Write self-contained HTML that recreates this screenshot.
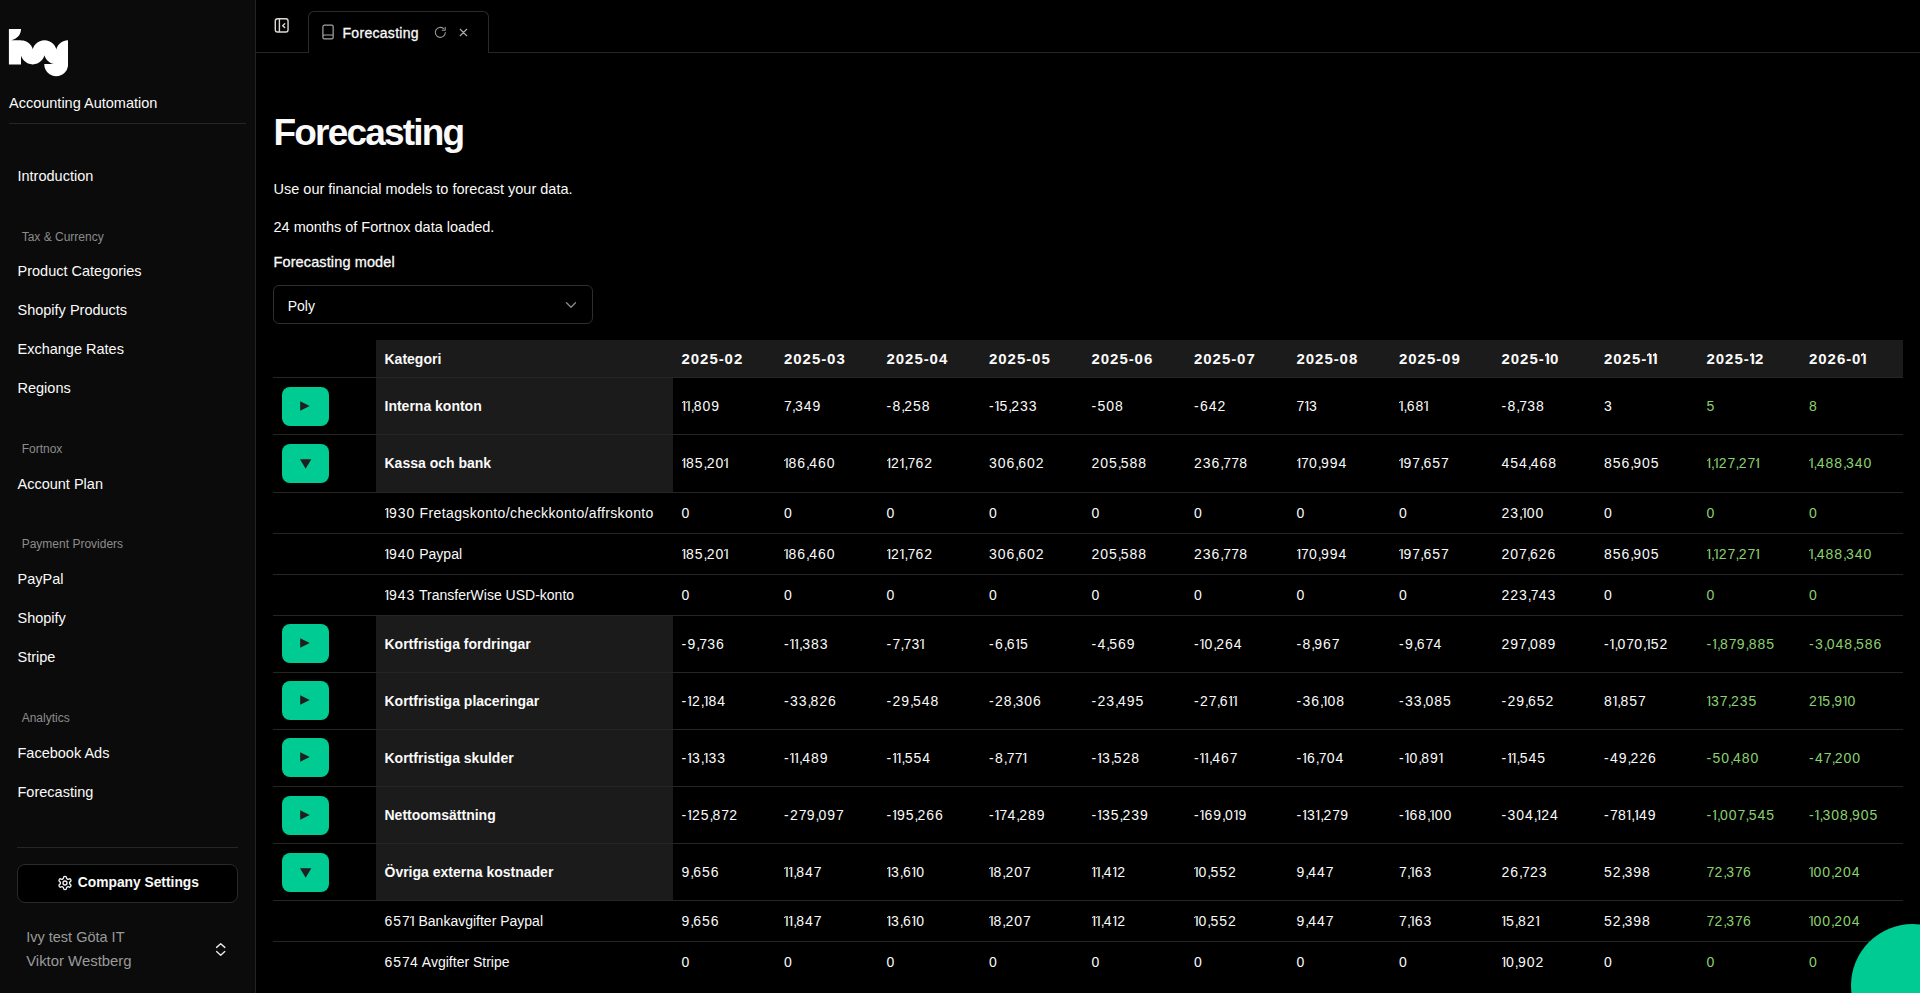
<!DOCTYPE html>
<html><head><meta charset="utf-8"><title>Forecasting</title>
<style>
html,body{margin:0;padding:0;background:#000;}
body{width:1920px;height:993px;overflow:hidden;position:relative;font-family:"Liberation Sans",sans-serif;color:#fafafa;}
.t{position:absolute;white-space:nowrap;}
.t i{font-style:normal;}
.o{position:relative;padding-left:0.9px;letter-spacing:-0.2px;}
.ob{position:relative;padding-left:1px;letter-spacing:0.2px;}
.ob::before{content:"";position:absolute;left:0px;top:3.4px;width:2.6px;height:2px;background:currentColor;transform:skewY(-28deg);transform-origin:100% 0;}
.o::before{content:"";position:absolute;left:0.2px;top:3.2px;width:2.2px;height:1.25px;background:currentColor;transform:skewY(-28deg);transform-origin:100% 0;}
.abs{position:absolute;}
#sb{position:absolute;left:0;top:0;width:255px;height:993px;background:#0b0b0b;border-right:1px solid #232323;}
</style></head><body>
<div id="sb"></div>
<svg class="abs" style="left:0;top:0" width="80" height="80" viewBox="0 0 80 80"><defs><clipPath id="lc"><rect x="0" y="0" width="68.1" height="80"/></clipPath></defs><path fill="#fff" clip-path="url(#lc)" d="M8.9 28.9 H21.05 A12.15 11.6 0 0 1 8.9 40.5 Z M8.9 40.3 H21 V64.4 H8.9 Z M8.90 52.599999999999994 V52.3 A12.1 12.1 0 0 1 33.10 52.3 V52.599999999999994 Z M32.40 52.599999999999994 V52.3 A12.1 12.1 0 0 1 56.60 52.3 V52.599999999999994 Z M56.00 52.599999999999994 V52.3 A12.1 12.1 0 0 1 80.20 52.3 V52.599999999999994 Z M44.80 52.0 V52.3 A12.1 12.1 0 0 1 20.60 52.3 V52.0 Z M68.30 52.0 V52.3 A12.1 12.1 0 0 1 44.10 52.3 V52.0 Z M56.2 52 H68.1 V64.7 H56.2 Z M68.10 64.05 V64.35 A11.9 11.9 0 0 1 44.30 64.35 V64.05 Z"/></svg>
<div class="t " style="left:9px;top:96.13px;font-size:14.5px;line-height:14.5px;">Accounting Automation</div>
<div class="abs" style="left:9px;top:123px;width:237px;height:1px;background:#262626"></div>
<div class="t " style="left:17.5px;top:168.73px;font-size:14.5px;line-height:14.5px;">Introduction</div>
<div class="t " style="left:21.7px;top:230.64px;font-size:12px;line-height:12px;color:#8c8c8c;">Tax &amp; Currency</div>
<div class="t " style="left:17.5px;top:263.53px;font-size:14.5px;line-height:14.5px;">Product Categories</div>
<div class="t " style="left:17.5px;top:302.53px;font-size:14.5px;line-height:14.5px;">Shopify Products</div>
<div class="t " style="left:17.5px;top:341.53px;font-size:14.5px;line-height:14.5px;">Exchange Rates</div>
<div class="t " style="left:17.5px;top:380.53px;font-size:14.5px;line-height:14.5px;">Regions</div>
<div class="t " style="left:21.7px;top:442.84px;font-size:12px;line-height:12px;color:#8c8c8c;">Fortnox</div>
<div class="t " style="left:17.5px;top:476.93px;font-size:14.5px;line-height:14.5px;">Account Plan</div>
<div class="t " style="left:21.7px;top:538.04px;font-size:12px;line-height:12px;color:#8c8c8c;">Payment Providers</div>
<div class="t " style="left:17.5px;top:571.63px;font-size:14.5px;line-height:14.5px;">PayPal</div>
<div class="t " style="left:17.5px;top:610.53px;font-size:14.5px;line-height:14.5px;">Shopify</div>
<div class="t " style="left:17.5px;top:649.53px;font-size:14.5px;line-height:14.5px;">Stripe</div>
<div class="t " style="left:21.7px;top:711.64px;font-size:12px;line-height:12px;color:#8c8c8c;">Analytics</div>
<div class="t " style="left:17.5px;top:745.53px;font-size:14.5px;line-height:14.5px;">Facebook Ads</div>
<div class="t " style="left:17.5px;top:784.63px;font-size:14.5px;line-height:14.5px;">Forecasting</div>
<div class="abs" style="left:17px;top:847px;width:221px;height:1px;background:#262626"></div>
<div class="abs" style="left:17px;top:864px;width:219px;height:37px;border:1px solid #2a2a2a;border-radius:8px;background:#000"></div>
<svg class="abs" style="left:57px;top:875px" width="16" height="16" viewBox="0 0 24 24" fill="none" stroke="#f2f2f2" stroke-width="2" stroke-linecap="round" stroke-linejoin="round"><path d="M12.22 2h-.44a2 2 0 0 0-2 2v.18a2 2 0 0 1-1 1.73l-.43.25a2 2 0 0 1-2 0l-.15-.08a2 2 0 0 0-2.73.73l-.22.38a2 2 0 0 0 .73 2.73l.15.1a2 2 0 0 1 1 1.72v.51a2 2 0 0 1-1 1.74l-.15.09a2 2 0 0 0-.73 2.73l.22.38a2 2 0 0 0 2.73.73l.15-.08a2 2 0 0 1 2 0l.43.25a2 2 0 0 1 1 1.73V20a2 2 0 0 0 2 2h.44a2 2 0 0 0 2-2v-.18a2 2 0 0 1 1-1.73l.43-.25a2 2 0 0 1 2 0l.15.08a2 2 0 0 0 2.73-.73l.22-.39a2 2 0 0 0-.73-2.73l-.15-.08a2 2 0 0 1-1-1.74v-.5a2 2 0 0 1 1-1.74l.15-.09a2 2 0 0 0 .73-2.73l-.22-.38a2 2 0 0 0-2.73-.73l-.15.08a2 2 0 0 1-2 0l-.43-.25a2 2 0 0 1-1-1.73V4a2 2 0 0 0-2-2z"/><circle cx="12" cy="12" r="3"/></svg>
<div class="t " style="left:77.8px;top:876.42px;font-size:13.8px;line-height:13.8px;font-weight:700;">Company Settings</div>
<div class="t " style="left:26.2px;top:929.73px;font-size:14.5px;line-height:14.5px;color:#9a9a9a;">Ivy test Göta IT</div>
<div class="t " style="left:26.2px;top:953.99px;font-size:14.9px;line-height:14.9px;color:#9a9a9a;">Viktor Westberg</div>
<svg class="abs" style="left:214px;top:941px" width="14" height="16" viewBox="0 0 14 16" fill="none" stroke="#ebe8e6" stroke-width="1.4" stroke-linecap="round" stroke-linejoin="round"><path d="M2.6 6.4 L6.7 2.8 L10.8 6.4"/><path d="M2.6 10.6 L6.7 14.3 L10.8 10.6"/></svg>
<div class="abs" style="left:256px;top:52px;width:1664px;height:1px;background:#262626"></div>
<div class="abs" style="left:308px;top:11px;width:179px;height:41px;border:1px solid #2a2a2a;border-bottom:none;border-radius:6px 6px 0 0;background:#000"></div>
<svg class="abs" style="left:273px;top:17px" width="17" height="17" viewBox="0 0 17 17" fill="none" stroke="#dcd9d6" stroke-width="1.4"><rect x="2.3" y="1.8" width="12.75" height="13.2" rx="2.2"/><path d="M6.4 1.8 V15"/><path d="M11.7 6.8 L9.7 8.7 L11.7 10.6" stroke-linecap="round" stroke-linejoin="round"/></svg>
<svg class="abs" style="left:321px;top:24px" width="14" height="16" viewBox="0 0 14 16" fill="none" stroke="#a8a5a2" stroke-width="1.2"><path d="M1.9 12.6 V2.8 a1.6 1.6 0 0 1 1.6-1.6 H10.95 a1.2 1.2 0 0 1 1.2 1.2 V13.6 a1.2 1.2 0 0 1 -1.2 1.2 H3.5 a1.6 1.6 0 0 1 -1.6-1.6 V12.6 a1.6 1.6 0 0 1 1.6-1.6 H12.15"/></svg>
<div class="t " style="left:342.5px;top:25.65px;font-size:14px;line-height:14px;letter-spacing:0.3px;-webkit-text-stroke:0.3px #fafafa;">Forecasting</div>
<svg class="abs" style="left:434px;top:26px" width="13" height="13" viewBox="0 0 13 13" fill="none" stroke="#9a9a9a" stroke-width="1.1" stroke-linecap="round"><path d="M11.3 6.5 A5 5 0 1 1 9.6 2.6"/><path d="M11.2 1.2 V4.2 H8.2" stroke-linejoin="round"/></svg>
<svg class="abs" style="left:458px;top:27px" width="10" height="10" viewBox="0 0 10 10" fill="none" stroke="#a8a8a8" stroke-width="1.2" stroke-linecap="round"><path d="M2.2 2.3 L8.7 8.7 M8.7 2.3 L2.2 8.7"/></svg>
<div class="t " style="left:273.5px;top:113.58px;font-size:37px;line-height:37px;font-weight:700;letter-spacing:-1.8px;">Forecasting</div>
<div class="t " style="left:273.5px;top:181.53px;font-size:14.5px;line-height:14.5px;">Use our financial models to forecast your data.</div>
<div class="t " style="left:273.5px;top:219.63px;font-size:14.5px;line-height:14.5px;">24 months of Fortnox data loaded.</div>
<div class="t " style="left:273.5px;top:255.13px;font-size:14.5px;line-height:14.5px;letter-spacing:0.12px;-webkit-text-stroke:0.3px #fafafa;">Forecasting model</div>
<div class="abs" style="left:273px;top:285px;width:318px;height:37px;border:1px solid #2e2e2e;border-radius:6px;background:#000"></div>
<div class="t " style="left:287.7px;top:298.55px;font-size:14px;line-height:14px;">Poly</div>
<svg class="abs" style="left:564px;top:298.5px" width="14" height="12" viewBox="0 0 14 12" fill="none" stroke="#8a8a8a" stroke-width="1.3" stroke-linecap="round" stroke-linejoin="round"><path d="M2.5 3.8 L7 8.2 L11.5 3.8"/></svg>
<div class="abs" style="left:376px;top:340px;width:1527px;height:37px;background:#1b1b1b"></div>
<div class="t " style="left:384.5px;top:352.15px;font-size:14px;line-height:14px;font-weight:700;">Kategori</div>
<div class="t " style="left:681.5px;top:350.90px;font-size:15px;line-height:15px;font-weight:700;letter-spacing:0.95px;">2025-02</div>
<div class="t " style="left:784.0px;top:350.90px;font-size:15px;line-height:15px;font-weight:700;letter-spacing:0.95px;">2025-03</div>
<div class="t " style="left:886.5px;top:350.90px;font-size:15px;line-height:15px;font-weight:700;letter-spacing:0.95px;">2025-04</div>
<div class="t " style="left:989.0px;top:350.90px;font-size:15px;line-height:15px;font-weight:700;letter-spacing:0.95px;">2025-05</div>
<div class="t " style="left:1091.5px;top:350.90px;font-size:15px;line-height:15px;font-weight:700;letter-spacing:0.95px;">2025-06</div>
<div class="t " style="left:1194.0px;top:350.90px;font-size:15px;line-height:15px;font-weight:700;letter-spacing:0.95px;">2025-07</div>
<div class="t " style="left:1296.5px;top:350.90px;font-size:15px;line-height:15px;font-weight:700;letter-spacing:0.95px;">2025-08</div>
<div class="t " style="left:1399.0px;top:350.90px;font-size:15px;line-height:15px;font-weight:700;letter-spacing:0.95px;">2025-09</div>
<div class="t " style="left:1501.5px;top:350.90px;font-size:15px;line-height:15px;font-weight:700;letter-spacing:0.95px;">2025-<i class="ob">I</i>0</div>
<div class="t " style="left:1604.0px;top:350.90px;font-size:15px;line-height:15px;font-weight:700;letter-spacing:0.95px;">2025-<i class="ob">I</i><i class="ob">I</i></div>
<div class="t " style="left:1706.5px;top:350.90px;font-size:15px;line-height:15px;font-weight:700;letter-spacing:0.95px;">2025-<i class="ob">I</i>2</div>
<div class="t " style="left:1809.0px;top:350.90px;font-size:15px;line-height:15px;font-weight:700;letter-spacing:0.95px;">2026-0<i class="ob">I</i></div>
<div class="abs" style="left:273px;top:377px;width:1630px;height:1px;background:#252525"></div>
<div class="abs" style="left:376px;top:378px;width:297px;height:56px;background:#1b1b1b"></div>
<div class="abs" style="left:282px;top:387px;width:47px;height:39px;border-radius:8px;background:#00cb93"></div>
<svg class="abs" style="left:300px;top:401px" width="10" height="10" viewBox="0 0 10 10"><path d="M0.2 0.2 L9.7 5 L0.2 9.8 Z" fill="#1f1f1f"/></svg>
<div class="t " style="left:384.5px;top:398.96px;font-size:14px;line-height:14px;font-weight:700;">Interna konton</div>
<div class="t " style="left:681.5px;top:398.96px;font-size:14px;line-height:14px;"><i class="o">I</i><i class="o">I</i><i style="letter-spacing:-0.8px">,</i><i style="letter-spacing:0.95px">8</i><i style="letter-spacing:0.95px">0</i><i style="letter-spacing:0.95px">9</i></div>
<div class="t " style="left:784.0px;top:398.96px;font-size:14px;line-height:14px;"><i style="letter-spacing:0.2px">7</i><i style="letter-spacing:-0.8px">,</i><i style="letter-spacing:0.95px">3</i><i style="letter-spacing:0.95px">4</i><i style="letter-spacing:0.95px">9</i></div>
<div class="t " style="left:886.5px;top:398.96px;font-size:14px;line-height:14px;"><i style="letter-spacing:1.2px">-</i><i style="letter-spacing:0.95px">8</i><i style="letter-spacing:-0.8px">,</i><i style="letter-spacing:0.95px">2</i><i style="letter-spacing:0.95px">5</i><i style="letter-spacing:0.95px">8</i></div>
<div class="t " style="left:989.0px;top:398.96px;font-size:14px;line-height:14px;"><i style="letter-spacing:1.2px">-</i><i class="o">I</i><i style="letter-spacing:0.95px">5</i><i style="letter-spacing:-0.8px">,</i><i style="letter-spacing:0.95px">2</i><i style="letter-spacing:0.95px">3</i><i style="letter-spacing:0.95px">3</i></div>
<div class="t " style="left:1091.5px;top:398.96px;font-size:14px;line-height:14px;"><i style="letter-spacing:1.2px">-</i><i style="letter-spacing:0.95px">5</i><i style="letter-spacing:0.95px">0</i><i style="letter-spacing:0.95px">8</i></div>
<div class="t " style="left:1194.0px;top:398.96px;font-size:14px;line-height:14px;"><i style="letter-spacing:1.2px">-</i><i style="letter-spacing:0.95px">6</i><i style="letter-spacing:0.95px">4</i><i style="letter-spacing:0.95px">2</i></div>
<div class="t " style="left:1296.5px;top:398.96px;font-size:14px;line-height:14px;"><i style="letter-spacing:0.2px">7</i><i class="o">I</i><i style="letter-spacing:0.95px">3</i></div>
<div class="t " style="left:1399.0px;top:398.96px;font-size:14px;line-height:14px;"><i class="o">I</i><i style="letter-spacing:-0.8px">,</i><i style="letter-spacing:0.95px">6</i><i style="letter-spacing:0.95px">8</i><i class="o">I</i></div>
<div class="t " style="left:1501.5px;top:398.96px;font-size:14px;line-height:14px;"><i style="letter-spacing:1.2px">-</i><i style="letter-spacing:0.95px">8</i><i style="letter-spacing:-0.8px">,</i><i style="letter-spacing:0.2px">7</i><i style="letter-spacing:0.95px">3</i><i style="letter-spacing:0.95px">8</i></div>
<div class="t " style="left:1604.0px;top:398.96px;font-size:14px;line-height:14px;"><i style="letter-spacing:0.95px">3</i></div>
<div class="t " style="left:1706.5px;top:398.96px;font-size:14px;line-height:14px;color:#8ad16f;"><i style="letter-spacing:0.95px">5</i></div>
<div class="t " style="left:1809.0px;top:398.96px;font-size:14px;line-height:14px;color:#8ad16f;"><i style="letter-spacing:0.95px">8</i></div>
<div class="abs" style="left:273px;top:434px;width:1630px;height:1px;background:#252525"></div>
<div class="abs" style="left:376px;top:435px;width:297px;height:57px;background:#1b1b1b"></div>
<div class="abs" style="left:282px;top:444px;width:47px;height:39px;border-radius:8px;background:#00cb93"></div>
<svg class="abs" style="left:300px;top:459px" width="12" height="10" viewBox="0 0 12 10"><path d="M0 0.2 L11.3 0.2 L5.65 9.8 Z" fill="#1f1f1f"/></svg>
<div class="t " style="left:384.5px;top:456.46px;font-size:14px;line-height:14px;font-weight:700;">Kassa och bank</div>
<div class="t " style="left:681.5px;top:456.46px;font-size:14px;line-height:14px;"><i class="o">I</i><i style="letter-spacing:0.95px">8</i><i style="letter-spacing:0.95px">5</i><i style="letter-spacing:-0.8px">,</i><i style="letter-spacing:0.95px">2</i><i style="letter-spacing:0.95px">0</i><i class="o">I</i></div>
<div class="t " style="left:784.0px;top:456.46px;font-size:14px;line-height:14px;"><i class="o">I</i><i style="letter-spacing:0.95px">8</i><i style="letter-spacing:0.95px">6</i><i style="letter-spacing:-0.8px">,</i><i style="letter-spacing:0.95px">4</i><i style="letter-spacing:0.95px">6</i><i style="letter-spacing:0.95px">0</i></div>
<div class="t " style="left:886.5px;top:456.46px;font-size:14px;line-height:14px;"><i class="o">I</i><i style="letter-spacing:0.95px">2</i><i class="o">I</i><i style="letter-spacing:-0.8px">,</i><i style="letter-spacing:0.2px">7</i><i style="letter-spacing:0.95px">6</i><i style="letter-spacing:0.95px">2</i></div>
<div class="t " style="left:989.0px;top:456.46px;font-size:14px;line-height:14px;"><i style="letter-spacing:0.95px">3</i><i style="letter-spacing:0.95px">0</i><i style="letter-spacing:0.95px">6</i><i style="letter-spacing:-0.8px">,</i><i style="letter-spacing:0.95px">6</i><i style="letter-spacing:0.95px">0</i><i style="letter-spacing:0.95px">2</i></div>
<div class="t " style="left:1091.5px;top:456.46px;font-size:14px;line-height:14px;"><i style="letter-spacing:0.95px">2</i><i style="letter-spacing:0.95px">0</i><i style="letter-spacing:0.95px">5</i><i style="letter-spacing:-0.8px">,</i><i style="letter-spacing:0.95px">5</i><i style="letter-spacing:0.95px">8</i><i style="letter-spacing:0.95px">8</i></div>
<div class="t " style="left:1194.0px;top:456.46px;font-size:14px;line-height:14px;"><i style="letter-spacing:0.95px">2</i><i style="letter-spacing:0.95px">3</i><i style="letter-spacing:0.95px">6</i><i style="letter-spacing:-0.8px">,</i><i style="letter-spacing:0.2px">7</i><i style="letter-spacing:0.2px">7</i><i style="letter-spacing:0.95px">8</i></div>
<div class="t " style="left:1296.5px;top:456.46px;font-size:14px;line-height:14px;"><i class="o">I</i><i style="letter-spacing:0.2px">7</i><i style="letter-spacing:0.95px">0</i><i style="letter-spacing:-0.8px">,</i><i style="letter-spacing:0.95px">9</i><i style="letter-spacing:0.95px">9</i><i style="letter-spacing:0.95px">4</i></div>
<div class="t " style="left:1399.0px;top:456.46px;font-size:14px;line-height:14px;"><i class="o">I</i><i style="letter-spacing:0.95px">9</i><i style="letter-spacing:0.2px">7</i><i style="letter-spacing:-0.8px">,</i><i style="letter-spacing:0.95px">6</i><i style="letter-spacing:0.95px">5</i><i style="letter-spacing:0.2px">7</i></div>
<div class="t " style="left:1501.5px;top:456.46px;font-size:14px;line-height:14px;"><i style="letter-spacing:0.95px">4</i><i style="letter-spacing:0.95px">5</i><i style="letter-spacing:0.95px">4</i><i style="letter-spacing:-0.8px">,</i><i style="letter-spacing:0.95px">4</i><i style="letter-spacing:0.95px">6</i><i style="letter-spacing:0.95px">8</i></div>
<div class="t " style="left:1604.0px;top:456.46px;font-size:14px;line-height:14px;"><i style="letter-spacing:0.95px">8</i><i style="letter-spacing:0.95px">5</i><i style="letter-spacing:0.95px">6</i><i style="letter-spacing:-0.8px">,</i><i style="letter-spacing:0.95px">9</i><i style="letter-spacing:0.95px">0</i><i style="letter-spacing:0.95px">5</i></div>
<div class="t " style="left:1706.5px;top:456.46px;font-size:14px;line-height:14px;color:#8ad16f;"><i class="o">I</i><i style="letter-spacing:-0.8px">,</i><i class="o">I</i><i style="letter-spacing:0.95px">2</i><i style="letter-spacing:0.2px">7</i><i style="letter-spacing:-0.8px">,</i><i style="letter-spacing:0.95px">2</i><i style="letter-spacing:0.2px">7</i><i class="o">I</i></div>
<div class="t " style="left:1809.0px;top:456.46px;font-size:14px;line-height:14px;color:#8ad16f;"><i class="o">I</i><i style="letter-spacing:-0.8px">,</i><i style="letter-spacing:0.95px">4</i><i style="letter-spacing:0.95px">8</i><i style="letter-spacing:0.95px">8</i><i style="letter-spacing:-0.8px">,</i><i style="letter-spacing:0.95px">3</i><i style="letter-spacing:0.95px">4</i><i style="letter-spacing:0.95px">0</i></div>
<div class="abs" style="left:273px;top:492px;width:1630px;height:1px;background:#252525"></div>
<div class="t " style="left:384.5px;top:505.97px;font-size:14px;line-height:14px;letter-spacing:0.37px;"><i class="o">I</i><i style="letter-spacing:0.95px">9</i><i style="letter-spacing:0.95px">3</i><i style="letter-spacing:0.95px">0</i> Fretagskonto/checkkonto/affrskonto</div>
<div class="t " style="left:681.5px;top:505.97px;font-size:14px;line-height:14px;"><i style="letter-spacing:0.95px">0</i></div>
<div class="t " style="left:784.0px;top:505.97px;font-size:14px;line-height:14px;"><i style="letter-spacing:0.95px">0</i></div>
<div class="t " style="left:886.5px;top:505.97px;font-size:14px;line-height:14px;"><i style="letter-spacing:0.95px">0</i></div>
<div class="t " style="left:989.0px;top:505.97px;font-size:14px;line-height:14px;"><i style="letter-spacing:0.95px">0</i></div>
<div class="t " style="left:1091.5px;top:505.97px;font-size:14px;line-height:14px;"><i style="letter-spacing:0.95px">0</i></div>
<div class="t " style="left:1194.0px;top:505.97px;font-size:14px;line-height:14px;"><i style="letter-spacing:0.95px">0</i></div>
<div class="t " style="left:1296.5px;top:505.97px;font-size:14px;line-height:14px;"><i style="letter-spacing:0.95px">0</i></div>
<div class="t " style="left:1399.0px;top:505.97px;font-size:14px;line-height:14px;"><i style="letter-spacing:0.95px">0</i></div>
<div class="t " style="left:1501.5px;top:505.97px;font-size:14px;line-height:14px;"><i style="letter-spacing:0.95px">2</i><i style="letter-spacing:0.95px">3</i><i style="letter-spacing:-0.8px">,</i><i class="o">I</i><i style="letter-spacing:0.95px">0</i><i style="letter-spacing:0.95px">0</i></div>
<div class="t " style="left:1604.0px;top:505.97px;font-size:14px;line-height:14px;"><i style="letter-spacing:0.95px">0</i></div>
<div class="t " style="left:1706.5px;top:505.97px;font-size:14px;line-height:14px;color:#8ad16f;"><i style="letter-spacing:0.95px">0</i></div>
<div class="t " style="left:1809.0px;top:505.97px;font-size:14px;line-height:14px;color:#8ad16f;"><i style="letter-spacing:0.95px">0</i></div>
<div class="abs" style="left:273px;top:533px;width:1630px;height:1px;background:#252525"></div>
<div class="t " style="left:384.5px;top:546.97px;font-size:14px;line-height:14px;"><i class="o">I</i><i style="letter-spacing:0.95px">9</i><i style="letter-spacing:0.95px">4</i><i style="letter-spacing:0.95px">0</i> Paypal</div>
<div class="t " style="left:681.5px;top:546.97px;font-size:14px;line-height:14px;"><i class="o">I</i><i style="letter-spacing:0.95px">8</i><i style="letter-spacing:0.95px">5</i><i style="letter-spacing:-0.8px">,</i><i style="letter-spacing:0.95px">2</i><i style="letter-spacing:0.95px">0</i><i class="o">I</i></div>
<div class="t " style="left:784.0px;top:546.97px;font-size:14px;line-height:14px;"><i class="o">I</i><i style="letter-spacing:0.95px">8</i><i style="letter-spacing:0.95px">6</i><i style="letter-spacing:-0.8px">,</i><i style="letter-spacing:0.95px">4</i><i style="letter-spacing:0.95px">6</i><i style="letter-spacing:0.95px">0</i></div>
<div class="t " style="left:886.5px;top:546.97px;font-size:14px;line-height:14px;"><i class="o">I</i><i style="letter-spacing:0.95px">2</i><i class="o">I</i><i style="letter-spacing:-0.8px">,</i><i style="letter-spacing:0.2px">7</i><i style="letter-spacing:0.95px">6</i><i style="letter-spacing:0.95px">2</i></div>
<div class="t " style="left:989.0px;top:546.97px;font-size:14px;line-height:14px;"><i style="letter-spacing:0.95px">3</i><i style="letter-spacing:0.95px">0</i><i style="letter-spacing:0.95px">6</i><i style="letter-spacing:-0.8px">,</i><i style="letter-spacing:0.95px">6</i><i style="letter-spacing:0.95px">0</i><i style="letter-spacing:0.95px">2</i></div>
<div class="t " style="left:1091.5px;top:546.97px;font-size:14px;line-height:14px;"><i style="letter-spacing:0.95px">2</i><i style="letter-spacing:0.95px">0</i><i style="letter-spacing:0.95px">5</i><i style="letter-spacing:-0.8px">,</i><i style="letter-spacing:0.95px">5</i><i style="letter-spacing:0.95px">8</i><i style="letter-spacing:0.95px">8</i></div>
<div class="t " style="left:1194.0px;top:546.97px;font-size:14px;line-height:14px;"><i style="letter-spacing:0.95px">2</i><i style="letter-spacing:0.95px">3</i><i style="letter-spacing:0.95px">6</i><i style="letter-spacing:-0.8px">,</i><i style="letter-spacing:0.2px">7</i><i style="letter-spacing:0.2px">7</i><i style="letter-spacing:0.95px">8</i></div>
<div class="t " style="left:1296.5px;top:546.97px;font-size:14px;line-height:14px;"><i class="o">I</i><i style="letter-spacing:0.2px">7</i><i style="letter-spacing:0.95px">0</i><i style="letter-spacing:-0.8px">,</i><i style="letter-spacing:0.95px">9</i><i style="letter-spacing:0.95px">9</i><i style="letter-spacing:0.95px">4</i></div>
<div class="t " style="left:1399.0px;top:546.97px;font-size:14px;line-height:14px;"><i class="o">I</i><i style="letter-spacing:0.95px">9</i><i style="letter-spacing:0.2px">7</i><i style="letter-spacing:-0.8px">,</i><i style="letter-spacing:0.95px">6</i><i style="letter-spacing:0.95px">5</i><i style="letter-spacing:0.2px">7</i></div>
<div class="t " style="left:1501.5px;top:546.97px;font-size:14px;line-height:14px;"><i style="letter-spacing:0.95px">2</i><i style="letter-spacing:0.95px">0</i><i style="letter-spacing:0.2px">7</i><i style="letter-spacing:-0.8px">,</i><i style="letter-spacing:0.95px">6</i><i style="letter-spacing:0.95px">2</i><i style="letter-spacing:0.95px">6</i></div>
<div class="t " style="left:1604.0px;top:546.97px;font-size:14px;line-height:14px;"><i style="letter-spacing:0.95px">8</i><i style="letter-spacing:0.95px">5</i><i style="letter-spacing:0.95px">6</i><i style="letter-spacing:-0.8px">,</i><i style="letter-spacing:0.95px">9</i><i style="letter-spacing:0.95px">0</i><i style="letter-spacing:0.95px">5</i></div>
<div class="t " style="left:1706.5px;top:546.97px;font-size:14px;line-height:14px;color:#8ad16f;"><i class="o">I</i><i style="letter-spacing:-0.8px">,</i><i class="o">I</i><i style="letter-spacing:0.95px">2</i><i style="letter-spacing:0.2px">7</i><i style="letter-spacing:-0.8px">,</i><i style="letter-spacing:0.95px">2</i><i style="letter-spacing:0.2px">7</i><i class="o">I</i></div>
<div class="t " style="left:1809.0px;top:546.97px;font-size:14px;line-height:14px;color:#8ad16f;"><i class="o">I</i><i style="letter-spacing:-0.8px">,</i><i style="letter-spacing:0.95px">4</i><i style="letter-spacing:0.95px">8</i><i style="letter-spacing:0.95px">8</i><i style="letter-spacing:-0.8px">,</i><i style="letter-spacing:0.95px">3</i><i style="letter-spacing:0.95px">4</i><i style="letter-spacing:0.95px">0</i></div>
<div class="abs" style="left:273px;top:574px;width:1630px;height:1px;background:#252525"></div>
<div class="t " style="left:384.5px;top:587.97px;font-size:14px;line-height:14px;"><i class="o">I</i><i style="letter-spacing:0.95px">9</i><i style="letter-spacing:0.95px">4</i><i style="letter-spacing:0.95px">3</i> TransferWise USD-konto</div>
<div class="t " style="left:681.5px;top:587.97px;font-size:14px;line-height:14px;"><i style="letter-spacing:0.95px">0</i></div>
<div class="t " style="left:784.0px;top:587.97px;font-size:14px;line-height:14px;"><i style="letter-spacing:0.95px">0</i></div>
<div class="t " style="left:886.5px;top:587.97px;font-size:14px;line-height:14px;"><i style="letter-spacing:0.95px">0</i></div>
<div class="t " style="left:989.0px;top:587.97px;font-size:14px;line-height:14px;"><i style="letter-spacing:0.95px">0</i></div>
<div class="t " style="left:1091.5px;top:587.97px;font-size:14px;line-height:14px;"><i style="letter-spacing:0.95px">0</i></div>
<div class="t " style="left:1194.0px;top:587.97px;font-size:14px;line-height:14px;"><i style="letter-spacing:0.95px">0</i></div>
<div class="t " style="left:1296.5px;top:587.97px;font-size:14px;line-height:14px;"><i style="letter-spacing:0.95px">0</i></div>
<div class="t " style="left:1399.0px;top:587.97px;font-size:14px;line-height:14px;"><i style="letter-spacing:0.95px">0</i></div>
<div class="t " style="left:1501.5px;top:587.97px;font-size:14px;line-height:14px;"><i style="letter-spacing:0.95px">2</i><i style="letter-spacing:0.95px">2</i><i style="letter-spacing:0.95px">3</i><i style="letter-spacing:-0.8px">,</i><i style="letter-spacing:0.2px">7</i><i style="letter-spacing:0.95px">4</i><i style="letter-spacing:0.95px">3</i></div>
<div class="t " style="left:1604.0px;top:587.97px;font-size:14px;line-height:14px;"><i style="letter-spacing:0.95px">0</i></div>
<div class="t " style="left:1706.5px;top:587.97px;font-size:14px;line-height:14px;color:#8ad16f;"><i style="letter-spacing:0.95px">0</i></div>
<div class="t " style="left:1809.0px;top:587.97px;font-size:14px;line-height:14px;color:#8ad16f;"><i style="letter-spacing:0.95px">0</i></div>
<div class="abs" style="left:273px;top:615px;width:1630px;height:1px;background:#252525"></div>
<div class="abs" style="left:376px;top:616px;width:297px;height:56px;background:#1b1b1b"></div>
<div class="abs" style="left:282px;top:624px;width:47px;height:39px;border-radius:8px;background:#00cb93"></div>
<svg class="abs" style="left:300px;top:638px" width="10" height="10" viewBox="0 0 10 10"><path d="M0.2 0.2 L9.7 5 L0.2 9.8 Z" fill="#1f1f1f"/></svg>
<div class="t " style="left:384.5px;top:636.97px;font-size:14px;line-height:14px;font-weight:700;">Kortfristiga fordringar</div>
<div class="t " style="left:681.5px;top:636.97px;font-size:14px;line-height:14px;"><i style="letter-spacing:1.2px">-</i><i style="letter-spacing:0.95px">9</i><i style="letter-spacing:-0.8px">,</i><i style="letter-spacing:0.2px">7</i><i style="letter-spacing:0.95px">3</i><i style="letter-spacing:0.95px">6</i></div>
<div class="t " style="left:784.0px;top:636.97px;font-size:14px;line-height:14px;"><i style="letter-spacing:1.2px">-</i><i class="o">I</i><i class="o">I</i><i style="letter-spacing:-0.8px">,</i><i style="letter-spacing:0.95px">3</i><i style="letter-spacing:0.95px">8</i><i style="letter-spacing:0.95px">3</i></div>
<div class="t " style="left:886.5px;top:636.97px;font-size:14px;line-height:14px;"><i style="letter-spacing:1.2px">-</i><i style="letter-spacing:0.2px">7</i><i style="letter-spacing:-0.8px">,</i><i style="letter-spacing:0.2px">7</i><i style="letter-spacing:0.95px">3</i><i class="o">I</i></div>
<div class="t " style="left:989.0px;top:636.97px;font-size:14px;line-height:14px;"><i style="letter-spacing:1.2px">-</i><i style="letter-spacing:0.95px">6</i><i style="letter-spacing:-0.8px">,</i><i style="letter-spacing:0.95px">6</i><i class="o">I</i><i style="letter-spacing:0.95px">5</i></div>
<div class="t " style="left:1091.5px;top:636.97px;font-size:14px;line-height:14px;"><i style="letter-spacing:1.2px">-</i><i style="letter-spacing:0.95px">4</i><i style="letter-spacing:-0.8px">,</i><i style="letter-spacing:0.95px">5</i><i style="letter-spacing:0.95px">6</i><i style="letter-spacing:0.95px">9</i></div>
<div class="t " style="left:1194.0px;top:636.97px;font-size:14px;line-height:14px;"><i style="letter-spacing:1.2px">-</i><i class="o">I</i><i style="letter-spacing:0.95px">0</i><i style="letter-spacing:-0.8px">,</i><i style="letter-spacing:0.95px">2</i><i style="letter-spacing:0.95px">6</i><i style="letter-spacing:0.95px">4</i></div>
<div class="t " style="left:1296.5px;top:636.97px;font-size:14px;line-height:14px;"><i style="letter-spacing:1.2px">-</i><i style="letter-spacing:0.95px">8</i><i style="letter-spacing:-0.8px">,</i><i style="letter-spacing:0.95px">9</i><i style="letter-spacing:0.95px">6</i><i style="letter-spacing:0.2px">7</i></div>
<div class="t " style="left:1399.0px;top:636.97px;font-size:14px;line-height:14px;"><i style="letter-spacing:1.2px">-</i><i style="letter-spacing:0.95px">9</i><i style="letter-spacing:-0.8px">,</i><i style="letter-spacing:0.95px">6</i><i style="letter-spacing:0.2px">7</i><i style="letter-spacing:0.95px">4</i></div>
<div class="t " style="left:1501.5px;top:636.97px;font-size:14px;line-height:14px;"><i style="letter-spacing:0.95px">2</i><i style="letter-spacing:0.95px">9</i><i style="letter-spacing:0.2px">7</i><i style="letter-spacing:-0.8px">,</i><i style="letter-spacing:0.95px">0</i><i style="letter-spacing:0.95px">8</i><i style="letter-spacing:0.95px">9</i></div>
<div class="t " style="left:1604.0px;top:636.97px;font-size:14px;line-height:14px;"><i style="letter-spacing:1.2px">-</i><i class="o">I</i><i style="letter-spacing:-0.8px">,</i><i style="letter-spacing:0.95px">0</i><i style="letter-spacing:0.2px">7</i><i style="letter-spacing:0.95px">0</i><i style="letter-spacing:-0.8px">,</i><i class="o">I</i><i style="letter-spacing:0.95px">5</i><i style="letter-spacing:0.95px">2</i></div>
<div class="t " style="left:1706.5px;top:636.97px;font-size:14px;line-height:14px;color:#8ad16f;"><i style="letter-spacing:1.2px">-</i><i class="o">I</i><i style="letter-spacing:-0.8px">,</i><i style="letter-spacing:0.95px">8</i><i style="letter-spacing:0.2px">7</i><i style="letter-spacing:0.95px">9</i><i style="letter-spacing:-0.8px">,</i><i style="letter-spacing:0.95px">8</i><i style="letter-spacing:0.95px">8</i><i style="letter-spacing:0.95px">5</i></div>
<div class="t " style="left:1809.0px;top:636.97px;font-size:14px;line-height:14px;color:#8ad16f;"><i style="letter-spacing:1.2px">-</i><i style="letter-spacing:0.95px">3</i><i style="letter-spacing:-0.8px">,</i><i style="letter-spacing:0.95px">0</i><i style="letter-spacing:0.95px">4</i><i style="letter-spacing:0.95px">8</i><i style="letter-spacing:-0.8px">,</i><i style="letter-spacing:0.95px">5</i><i style="letter-spacing:0.95px">8</i><i style="letter-spacing:0.95px">6</i></div>
<div class="abs" style="left:273px;top:672px;width:1630px;height:1px;background:#252525"></div>
<div class="abs" style="left:376px;top:673px;width:297px;height:56px;background:#1b1b1b"></div>
<div class="abs" style="left:282px;top:681px;width:47px;height:39px;border-radius:8px;background:#00cb93"></div>
<svg class="abs" style="left:300px;top:695px" width="10" height="10" viewBox="0 0 10 10"><path d="M0.2 0.2 L9.7 5 L0.2 9.8 Z" fill="#1f1f1f"/></svg>
<div class="t " style="left:384.5px;top:693.97px;font-size:14px;line-height:14px;font-weight:700;">Kortfristiga placeringar</div>
<div class="t " style="left:681.5px;top:693.97px;font-size:14px;line-height:14px;"><i style="letter-spacing:1.2px">-</i><i class="o">I</i><i style="letter-spacing:0.95px">2</i><i style="letter-spacing:-0.8px">,</i><i class="o">I</i><i style="letter-spacing:0.95px">8</i><i style="letter-spacing:0.95px">4</i></div>
<div class="t " style="left:784.0px;top:693.97px;font-size:14px;line-height:14px;"><i style="letter-spacing:1.2px">-</i><i style="letter-spacing:0.95px">3</i><i style="letter-spacing:0.95px">3</i><i style="letter-spacing:-0.8px">,</i><i style="letter-spacing:0.95px">8</i><i style="letter-spacing:0.95px">2</i><i style="letter-spacing:0.95px">6</i></div>
<div class="t " style="left:886.5px;top:693.97px;font-size:14px;line-height:14px;"><i style="letter-spacing:1.2px">-</i><i style="letter-spacing:0.95px">2</i><i style="letter-spacing:0.95px">9</i><i style="letter-spacing:-0.8px">,</i><i style="letter-spacing:0.95px">5</i><i style="letter-spacing:0.95px">4</i><i style="letter-spacing:0.95px">8</i></div>
<div class="t " style="left:989.0px;top:693.97px;font-size:14px;line-height:14px;"><i style="letter-spacing:1.2px">-</i><i style="letter-spacing:0.95px">2</i><i style="letter-spacing:0.95px">8</i><i style="letter-spacing:-0.8px">,</i><i style="letter-spacing:0.95px">3</i><i style="letter-spacing:0.95px">0</i><i style="letter-spacing:0.95px">6</i></div>
<div class="t " style="left:1091.5px;top:693.97px;font-size:14px;line-height:14px;"><i style="letter-spacing:1.2px">-</i><i style="letter-spacing:0.95px">2</i><i style="letter-spacing:0.95px">3</i><i style="letter-spacing:-0.8px">,</i><i style="letter-spacing:0.95px">4</i><i style="letter-spacing:0.95px">9</i><i style="letter-spacing:0.95px">5</i></div>
<div class="t " style="left:1194.0px;top:693.97px;font-size:14px;line-height:14px;"><i style="letter-spacing:1.2px">-</i><i style="letter-spacing:0.95px">2</i><i style="letter-spacing:0.2px">7</i><i style="letter-spacing:-0.8px">,</i><i style="letter-spacing:0.95px">6</i><i class="o">I</i><i class="o">I</i></div>
<div class="t " style="left:1296.5px;top:693.97px;font-size:14px;line-height:14px;"><i style="letter-spacing:1.2px">-</i><i style="letter-spacing:0.95px">3</i><i style="letter-spacing:0.95px">6</i><i style="letter-spacing:-0.8px">,</i><i class="o">I</i><i style="letter-spacing:0.95px">0</i><i style="letter-spacing:0.95px">8</i></div>
<div class="t " style="left:1399.0px;top:693.97px;font-size:14px;line-height:14px;"><i style="letter-spacing:1.2px">-</i><i style="letter-spacing:0.95px">3</i><i style="letter-spacing:0.95px">3</i><i style="letter-spacing:-0.8px">,</i><i style="letter-spacing:0.95px">0</i><i style="letter-spacing:0.95px">8</i><i style="letter-spacing:0.95px">5</i></div>
<div class="t " style="left:1501.5px;top:693.97px;font-size:14px;line-height:14px;"><i style="letter-spacing:1.2px">-</i><i style="letter-spacing:0.95px">2</i><i style="letter-spacing:0.95px">9</i><i style="letter-spacing:-0.8px">,</i><i style="letter-spacing:0.95px">6</i><i style="letter-spacing:0.95px">5</i><i style="letter-spacing:0.95px">2</i></div>
<div class="t " style="left:1604.0px;top:693.97px;font-size:14px;line-height:14px;"><i style="letter-spacing:0.95px">8</i><i class="o">I</i><i style="letter-spacing:-0.8px">,</i><i style="letter-spacing:0.95px">8</i><i style="letter-spacing:0.95px">5</i><i style="letter-spacing:0.2px">7</i></div>
<div class="t " style="left:1706.5px;top:693.97px;font-size:14px;line-height:14px;color:#8ad16f;"><i class="o">I</i><i style="letter-spacing:0.95px">3</i><i style="letter-spacing:0.2px">7</i><i style="letter-spacing:-0.8px">,</i><i style="letter-spacing:0.95px">2</i><i style="letter-spacing:0.95px">3</i><i style="letter-spacing:0.95px">5</i></div>
<div class="t " style="left:1809.0px;top:693.97px;font-size:14px;line-height:14px;color:#8ad16f;"><i style="letter-spacing:0.95px">2</i><i class="o">I</i><i style="letter-spacing:0.95px">5</i><i style="letter-spacing:-0.8px">,</i><i style="letter-spacing:0.95px">9</i><i class="o">I</i><i style="letter-spacing:0.95px">0</i></div>
<div class="abs" style="left:273px;top:729px;width:1630px;height:1px;background:#252525"></div>
<div class="abs" style="left:376px;top:730px;width:297px;height:56px;background:#1b1b1b"></div>
<div class="abs" style="left:282px;top:738px;width:47px;height:39px;border-radius:8px;background:#00cb93"></div>
<svg class="abs" style="left:300px;top:752px" width="10" height="10" viewBox="0 0 10 10"><path d="M0.2 0.2 L9.7 5 L0.2 9.8 Z" fill="#1f1f1f"/></svg>
<div class="t " style="left:384.5px;top:750.97px;font-size:14px;line-height:14px;font-weight:700;">Kortfristiga skulder</div>
<div class="t " style="left:681.5px;top:750.97px;font-size:14px;line-height:14px;"><i style="letter-spacing:1.2px">-</i><i class="o">I</i><i style="letter-spacing:0.95px">3</i><i style="letter-spacing:-0.8px">,</i><i class="o">I</i><i style="letter-spacing:0.95px">3</i><i style="letter-spacing:0.95px">3</i></div>
<div class="t " style="left:784.0px;top:750.97px;font-size:14px;line-height:14px;"><i style="letter-spacing:1.2px">-</i><i class="o">I</i><i class="o">I</i><i style="letter-spacing:-0.8px">,</i><i style="letter-spacing:0.95px">4</i><i style="letter-spacing:0.95px">8</i><i style="letter-spacing:0.95px">9</i></div>
<div class="t " style="left:886.5px;top:750.97px;font-size:14px;line-height:14px;"><i style="letter-spacing:1.2px">-</i><i class="o">I</i><i class="o">I</i><i style="letter-spacing:-0.8px">,</i><i style="letter-spacing:0.95px">5</i><i style="letter-spacing:0.95px">5</i><i style="letter-spacing:0.95px">4</i></div>
<div class="t " style="left:989.0px;top:750.97px;font-size:14px;line-height:14px;"><i style="letter-spacing:1.2px">-</i><i style="letter-spacing:0.95px">8</i><i style="letter-spacing:-0.8px">,</i><i style="letter-spacing:0.2px">7</i><i style="letter-spacing:0.2px">7</i><i class="o">I</i></div>
<div class="t " style="left:1091.5px;top:750.97px;font-size:14px;line-height:14px;"><i style="letter-spacing:1.2px">-</i><i class="o">I</i><i style="letter-spacing:0.95px">3</i><i style="letter-spacing:-0.8px">,</i><i style="letter-spacing:0.95px">5</i><i style="letter-spacing:0.95px">2</i><i style="letter-spacing:0.95px">8</i></div>
<div class="t " style="left:1194.0px;top:750.97px;font-size:14px;line-height:14px;"><i style="letter-spacing:1.2px">-</i><i class="o">I</i><i class="o">I</i><i style="letter-spacing:-0.8px">,</i><i style="letter-spacing:0.95px">4</i><i style="letter-spacing:0.95px">6</i><i style="letter-spacing:0.2px">7</i></div>
<div class="t " style="left:1296.5px;top:750.97px;font-size:14px;line-height:14px;"><i style="letter-spacing:1.2px">-</i><i class="o">I</i><i style="letter-spacing:0.95px">6</i><i style="letter-spacing:-0.8px">,</i><i style="letter-spacing:0.2px">7</i><i style="letter-spacing:0.95px">0</i><i style="letter-spacing:0.95px">4</i></div>
<div class="t " style="left:1399.0px;top:750.97px;font-size:14px;line-height:14px;"><i style="letter-spacing:1.2px">-</i><i class="o">I</i><i style="letter-spacing:0.95px">0</i><i style="letter-spacing:-0.8px">,</i><i style="letter-spacing:0.95px">8</i><i style="letter-spacing:0.95px">9</i><i class="o">I</i></div>
<div class="t " style="left:1501.5px;top:750.97px;font-size:14px;line-height:14px;"><i style="letter-spacing:1.2px">-</i><i class="o">I</i><i class="o">I</i><i style="letter-spacing:-0.8px">,</i><i style="letter-spacing:0.95px">5</i><i style="letter-spacing:0.95px">4</i><i style="letter-spacing:0.95px">5</i></div>
<div class="t " style="left:1604.0px;top:750.97px;font-size:14px;line-height:14px;"><i style="letter-spacing:1.2px">-</i><i style="letter-spacing:0.95px">4</i><i style="letter-spacing:0.95px">9</i><i style="letter-spacing:-0.8px">,</i><i style="letter-spacing:0.95px">2</i><i style="letter-spacing:0.95px">2</i><i style="letter-spacing:0.95px">6</i></div>
<div class="t " style="left:1706.5px;top:750.97px;font-size:14px;line-height:14px;color:#8ad16f;"><i style="letter-spacing:1.2px">-</i><i style="letter-spacing:0.95px">5</i><i style="letter-spacing:0.95px">0</i><i style="letter-spacing:-0.8px">,</i><i style="letter-spacing:0.95px">4</i><i style="letter-spacing:0.95px">8</i><i style="letter-spacing:0.95px">0</i></div>
<div class="t " style="left:1809.0px;top:750.97px;font-size:14px;line-height:14px;color:#8ad16f;"><i style="letter-spacing:1.2px">-</i><i style="letter-spacing:0.95px">4</i><i style="letter-spacing:0.2px">7</i><i style="letter-spacing:-0.8px">,</i><i style="letter-spacing:0.95px">2</i><i style="letter-spacing:0.95px">0</i><i style="letter-spacing:0.95px">0</i></div>
<div class="abs" style="left:273px;top:786px;width:1630px;height:1px;background:#252525"></div>
<div class="abs" style="left:376px;top:787px;width:297px;height:56px;background:#1b1b1b"></div>
<div class="abs" style="left:282px;top:796px;width:47px;height:39px;border-radius:8px;background:#00cb93"></div>
<svg class="abs" style="left:300px;top:810px" width="10" height="10" viewBox="0 0 10 10"><path d="M0.2 0.2 L9.7 5 L0.2 9.8 Z" fill="#1f1f1f"/></svg>
<div class="t " style="left:384.5px;top:807.97px;font-size:14px;line-height:14px;font-weight:700;">Nettoomsättning</div>
<div class="t " style="left:681.5px;top:807.97px;font-size:14px;line-height:14px;"><i style="letter-spacing:1.2px">-</i><i class="o">I</i><i style="letter-spacing:0.95px">2</i><i style="letter-spacing:0.95px">5</i><i style="letter-spacing:-0.8px">,</i><i style="letter-spacing:0.95px">8</i><i style="letter-spacing:0.2px">7</i><i style="letter-spacing:0.95px">2</i></div>
<div class="t " style="left:784.0px;top:807.97px;font-size:14px;line-height:14px;"><i style="letter-spacing:1.2px">-</i><i style="letter-spacing:0.95px">2</i><i style="letter-spacing:0.2px">7</i><i style="letter-spacing:0.95px">9</i><i style="letter-spacing:-0.8px">,</i><i style="letter-spacing:0.95px">0</i><i style="letter-spacing:0.95px">9</i><i style="letter-spacing:0.2px">7</i></div>
<div class="t " style="left:886.5px;top:807.97px;font-size:14px;line-height:14px;"><i style="letter-spacing:1.2px">-</i><i class="o">I</i><i style="letter-spacing:0.95px">9</i><i style="letter-spacing:0.95px">5</i><i style="letter-spacing:-0.8px">,</i><i style="letter-spacing:0.95px">2</i><i style="letter-spacing:0.95px">6</i><i style="letter-spacing:0.95px">6</i></div>
<div class="t " style="left:989.0px;top:807.97px;font-size:14px;line-height:14px;"><i style="letter-spacing:1.2px">-</i><i class="o">I</i><i style="letter-spacing:0.2px">7</i><i style="letter-spacing:0.95px">4</i><i style="letter-spacing:-0.8px">,</i><i style="letter-spacing:0.95px">2</i><i style="letter-spacing:0.95px">8</i><i style="letter-spacing:0.95px">9</i></div>
<div class="t " style="left:1091.5px;top:807.97px;font-size:14px;line-height:14px;"><i style="letter-spacing:1.2px">-</i><i class="o">I</i><i style="letter-spacing:0.95px">3</i><i style="letter-spacing:0.95px">5</i><i style="letter-spacing:-0.8px">,</i><i style="letter-spacing:0.95px">2</i><i style="letter-spacing:0.95px">3</i><i style="letter-spacing:0.95px">9</i></div>
<div class="t " style="left:1194.0px;top:807.97px;font-size:14px;line-height:14px;"><i style="letter-spacing:1.2px">-</i><i class="o">I</i><i style="letter-spacing:0.95px">6</i><i style="letter-spacing:0.95px">9</i><i style="letter-spacing:-0.8px">,</i><i style="letter-spacing:0.95px">0</i><i class="o">I</i><i style="letter-spacing:0.95px">9</i></div>
<div class="t " style="left:1296.5px;top:807.97px;font-size:14px;line-height:14px;"><i style="letter-spacing:1.2px">-</i><i class="o">I</i><i style="letter-spacing:0.95px">3</i><i class="o">I</i><i style="letter-spacing:-0.8px">,</i><i style="letter-spacing:0.95px">2</i><i style="letter-spacing:0.2px">7</i><i style="letter-spacing:0.95px">9</i></div>
<div class="t " style="left:1399.0px;top:807.97px;font-size:14px;line-height:14px;"><i style="letter-spacing:1.2px">-</i><i class="o">I</i><i style="letter-spacing:0.95px">6</i><i style="letter-spacing:0.95px">8</i><i style="letter-spacing:-0.8px">,</i><i class="o">I</i><i style="letter-spacing:0.95px">0</i><i style="letter-spacing:0.95px">0</i></div>
<div class="t " style="left:1501.5px;top:807.97px;font-size:14px;line-height:14px;"><i style="letter-spacing:1.2px">-</i><i style="letter-spacing:0.95px">3</i><i style="letter-spacing:0.95px">0</i><i style="letter-spacing:0.95px">4</i><i style="letter-spacing:-0.8px">,</i><i class="o">I</i><i style="letter-spacing:0.95px">2</i><i style="letter-spacing:0.95px">4</i></div>
<div class="t " style="left:1604.0px;top:807.97px;font-size:14px;line-height:14px;"><i style="letter-spacing:1.2px">-</i><i style="letter-spacing:0.2px">7</i><i style="letter-spacing:0.95px">8</i><i class="o">I</i><i style="letter-spacing:-0.8px">,</i><i class="o">I</i><i style="letter-spacing:0.95px">4</i><i style="letter-spacing:0.95px">9</i></div>
<div class="t " style="left:1706.5px;top:807.97px;font-size:14px;line-height:14px;color:#8ad16f;"><i style="letter-spacing:1.2px">-</i><i class="o">I</i><i style="letter-spacing:-0.8px">,</i><i style="letter-spacing:0.95px">0</i><i style="letter-spacing:0.95px">0</i><i style="letter-spacing:0.2px">7</i><i style="letter-spacing:-0.8px">,</i><i style="letter-spacing:0.95px">5</i><i style="letter-spacing:0.95px">4</i><i style="letter-spacing:0.95px">5</i></div>
<div class="t " style="left:1809.0px;top:807.97px;font-size:14px;line-height:14px;color:#8ad16f;"><i style="letter-spacing:1.2px">-</i><i class="o">I</i><i style="letter-spacing:-0.8px">,</i><i style="letter-spacing:0.95px">3</i><i style="letter-spacing:0.95px">0</i><i style="letter-spacing:0.95px">8</i><i style="letter-spacing:-0.8px">,</i><i style="letter-spacing:0.95px">9</i><i style="letter-spacing:0.95px">0</i><i style="letter-spacing:0.95px">5</i></div>
<div class="abs" style="left:273px;top:843px;width:1630px;height:1px;background:#252525"></div>
<div class="abs" style="left:376px;top:844px;width:297px;height:56px;background:#1b1b1b"></div>
<div class="abs" style="left:282px;top:853px;width:47px;height:39px;border-radius:8px;background:#00cb93"></div>
<svg class="abs" style="left:300px;top:868px" width="12" height="10" viewBox="0 0 12 10"><path d="M0 0.2 L11.3 0.2 L5.65 9.8 Z" fill="#1f1f1f"/></svg>
<div class="t " style="left:384.5px;top:864.97px;font-size:14px;line-height:14px;font-weight:700;">Övriga externa kostnader</div>
<div class="t " style="left:681.5px;top:864.97px;font-size:14px;line-height:14px;"><i style="letter-spacing:0.95px">9</i><i style="letter-spacing:-0.8px">,</i><i style="letter-spacing:0.95px">6</i><i style="letter-spacing:0.95px">5</i><i style="letter-spacing:0.95px">6</i></div>
<div class="t " style="left:784.0px;top:864.97px;font-size:14px;line-height:14px;"><i class="o">I</i><i class="o">I</i><i style="letter-spacing:-0.8px">,</i><i style="letter-spacing:0.95px">8</i><i style="letter-spacing:0.95px">4</i><i style="letter-spacing:0.2px">7</i></div>
<div class="t " style="left:886.5px;top:864.97px;font-size:14px;line-height:14px;"><i class="o">I</i><i style="letter-spacing:0.95px">3</i><i style="letter-spacing:-0.8px">,</i><i style="letter-spacing:0.95px">6</i><i class="o">I</i><i style="letter-spacing:0.95px">0</i></div>
<div class="t " style="left:989.0px;top:864.97px;font-size:14px;line-height:14px;"><i class="o">I</i><i style="letter-spacing:0.95px">8</i><i style="letter-spacing:-0.8px">,</i><i style="letter-spacing:0.95px">2</i><i style="letter-spacing:0.95px">0</i><i style="letter-spacing:0.2px">7</i></div>
<div class="t " style="left:1091.5px;top:864.97px;font-size:14px;line-height:14px;"><i class="o">I</i><i class="o">I</i><i style="letter-spacing:-0.8px">,</i><i style="letter-spacing:0.95px">4</i><i class="o">I</i><i style="letter-spacing:0.95px">2</i></div>
<div class="t " style="left:1194.0px;top:864.97px;font-size:14px;line-height:14px;"><i class="o">I</i><i style="letter-spacing:0.95px">0</i><i style="letter-spacing:-0.8px">,</i><i style="letter-spacing:0.95px">5</i><i style="letter-spacing:0.95px">5</i><i style="letter-spacing:0.95px">2</i></div>
<div class="t " style="left:1296.5px;top:864.97px;font-size:14px;line-height:14px;"><i style="letter-spacing:0.95px">9</i><i style="letter-spacing:-0.8px">,</i><i style="letter-spacing:0.95px">4</i><i style="letter-spacing:0.95px">4</i><i style="letter-spacing:0.2px">7</i></div>
<div class="t " style="left:1399.0px;top:864.97px;font-size:14px;line-height:14px;"><i style="letter-spacing:0.2px">7</i><i style="letter-spacing:-0.8px">,</i><i class="o">I</i><i style="letter-spacing:0.95px">6</i><i style="letter-spacing:0.95px">3</i></div>
<div class="t " style="left:1501.5px;top:864.97px;font-size:14px;line-height:14px;"><i style="letter-spacing:0.95px">2</i><i style="letter-spacing:0.95px">6</i><i style="letter-spacing:-0.8px">,</i><i style="letter-spacing:0.2px">7</i><i style="letter-spacing:0.95px">2</i><i style="letter-spacing:0.95px">3</i></div>
<div class="t " style="left:1604.0px;top:864.97px;font-size:14px;line-height:14px;"><i style="letter-spacing:0.95px">5</i><i style="letter-spacing:0.95px">2</i><i style="letter-spacing:-0.8px">,</i><i style="letter-spacing:0.95px">3</i><i style="letter-spacing:0.95px">9</i><i style="letter-spacing:0.95px">8</i></div>
<div class="t " style="left:1706.5px;top:864.97px;font-size:14px;line-height:14px;color:#8ad16f;"><i style="letter-spacing:0.2px">7</i><i style="letter-spacing:0.95px">2</i><i style="letter-spacing:-0.8px">,</i><i style="letter-spacing:0.95px">3</i><i style="letter-spacing:0.2px">7</i><i style="letter-spacing:0.95px">6</i></div>
<div class="t " style="left:1809.0px;top:864.97px;font-size:14px;line-height:14px;color:#8ad16f;"><i class="o">I</i><i style="letter-spacing:0.95px">0</i><i style="letter-spacing:0.95px">0</i><i style="letter-spacing:-0.8px">,</i><i style="letter-spacing:0.95px">2</i><i style="letter-spacing:0.95px">0</i><i style="letter-spacing:0.95px">4</i></div>
<div class="abs" style="left:273px;top:900px;width:1630px;height:1px;background:#252525"></div>
<div class="t " style="left:384.5px;top:913.97px;font-size:14px;line-height:14px;"><i style="letter-spacing:0.95px">6</i><i style="letter-spacing:0.95px">5</i><i style="letter-spacing:0.2px">7</i><i class="o">I</i> Bankavgifter Paypal</div>
<div class="t " style="left:681.5px;top:913.97px;font-size:14px;line-height:14px;"><i style="letter-spacing:0.95px">9</i><i style="letter-spacing:-0.8px">,</i><i style="letter-spacing:0.95px">6</i><i style="letter-spacing:0.95px">5</i><i style="letter-spacing:0.95px">6</i></div>
<div class="t " style="left:784.0px;top:913.97px;font-size:14px;line-height:14px;"><i class="o">I</i><i class="o">I</i><i style="letter-spacing:-0.8px">,</i><i style="letter-spacing:0.95px">8</i><i style="letter-spacing:0.95px">4</i><i style="letter-spacing:0.2px">7</i></div>
<div class="t " style="left:886.5px;top:913.97px;font-size:14px;line-height:14px;"><i class="o">I</i><i style="letter-spacing:0.95px">3</i><i style="letter-spacing:-0.8px">,</i><i style="letter-spacing:0.95px">6</i><i class="o">I</i><i style="letter-spacing:0.95px">0</i></div>
<div class="t " style="left:989.0px;top:913.97px;font-size:14px;line-height:14px;"><i class="o">I</i><i style="letter-spacing:0.95px">8</i><i style="letter-spacing:-0.8px">,</i><i style="letter-spacing:0.95px">2</i><i style="letter-spacing:0.95px">0</i><i style="letter-spacing:0.2px">7</i></div>
<div class="t " style="left:1091.5px;top:913.97px;font-size:14px;line-height:14px;"><i class="o">I</i><i class="o">I</i><i style="letter-spacing:-0.8px">,</i><i style="letter-spacing:0.95px">4</i><i class="o">I</i><i style="letter-spacing:0.95px">2</i></div>
<div class="t " style="left:1194.0px;top:913.97px;font-size:14px;line-height:14px;"><i class="o">I</i><i style="letter-spacing:0.95px">0</i><i style="letter-spacing:-0.8px">,</i><i style="letter-spacing:0.95px">5</i><i style="letter-spacing:0.95px">5</i><i style="letter-spacing:0.95px">2</i></div>
<div class="t " style="left:1296.5px;top:913.97px;font-size:14px;line-height:14px;"><i style="letter-spacing:0.95px">9</i><i style="letter-spacing:-0.8px">,</i><i style="letter-spacing:0.95px">4</i><i style="letter-spacing:0.95px">4</i><i style="letter-spacing:0.2px">7</i></div>
<div class="t " style="left:1399.0px;top:913.97px;font-size:14px;line-height:14px;"><i style="letter-spacing:0.2px">7</i><i style="letter-spacing:-0.8px">,</i><i class="o">I</i><i style="letter-spacing:0.95px">6</i><i style="letter-spacing:0.95px">3</i></div>
<div class="t " style="left:1501.5px;top:913.97px;font-size:14px;line-height:14px;"><i class="o">I</i><i style="letter-spacing:0.95px">5</i><i style="letter-spacing:-0.8px">,</i><i style="letter-spacing:0.95px">8</i><i style="letter-spacing:0.95px">2</i><i class="o">I</i></div>
<div class="t " style="left:1604.0px;top:913.97px;font-size:14px;line-height:14px;"><i style="letter-spacing:0.95px">5</i><i style="letter-spacing:0.95px">2</i><i style="letter-spacing:-0.8px">,</i><i style="letter-spacing:0.95px">3</i><i style="letter-spacing:0.95px">9</i><i style="letter-spacing:0.95px">8</i></div>
<div class="t " style="left:1706.5px;top:913.97px;font-size:14px;line-height:14px;color:#8ad16f;"><i style="letter-spacing:0.2px">7</i><i style="letter-spacing:0.95px">2</i><i style="letter-spacing:-0.8px">,</i><i style="letter-spacing:0.95px">3</i><i style="letter-spacing:0.2px">7</i><i style="letter-spacing:0.95px">6</i></div>
<div class="t " style="left:1809.0px;top:913.97px;font-size:14px;line-height:14px;color:#8ad16f;"><i class="o">I</i><i style="letter-spacing:0.95px">0</i><i style="letter-spacing:0.95px">0</i><i style="letter-spacing:-0.8px">,</i><i style="letter-spacing:0.95px">2</i><i style="letter-spacing:0.95px">0</i><i style="letter-spacing:0.95px">4</i></div>
<div class="abs" style="left:273px;top:941px;width:1630px;height:1px;background:#252525"></div>
<div class="t " style="left:384.5px;top:954.97px;font-size:14px;line-height:14px;"><i style="letter-spacing:0.95px">6</i><i style="letter-spacing:0.95px">5</i><i style="letter-spacing:0.2px">7</i><i style="letter-spacing:0.95px">4</i> Avgifter Stripe</div>
<div class="t " style="left:681.5px;top:954.97px;font-size:14px;line-height:14px;"><i style="letter-spacing:0.95px">0</i></div>
<div class="t " style="left:784.0px;top:954.97px;font-size:14px;line-height:14px;"><i style="letter-spacing:0.95px">0</i></div>
<div class="t " style="left:886.5px;top:954.97px;font-size:14px;line-height:14px;"><i style="letter-spacing:0.95px">0</i></div>
<div class="t " style="left:989.0px;top:954.97px;font-size:14px;line-height:14px;"><i style="letter-spacing:0.95px">0</i></div>
<div class="t " style="left:1091.5px;top:954.97px;font-size:14px;line-height:14px;"><i style="letter-spacing:0.95px">0</i></div>
<div class="t " style="left:1194.0px;top:954.97px;font-size:14px;line-height:14px;"><i style="letter-spacing:0.95px">0</i></div>
<div class="t " style="left:1296.5px;top:954.97px;font-size:14px;line-height:14px;"><i style="letter-spacing:0.95px">0</i></div>
<div class="t " style="left:1399.0px;top:954.97px;font-size:14px;line-height:14px;"><i style="letter-spacing:0.95px">0</i></div>
<div class="t " style="left:1501.5px;top:954.97px;font-size:14px;line-height:14px;"><i class="o">I</i><i style="letter-spacing:0.95px">0</i><i style="letter-spacing:-0.8px">,</i><i style="letter-spacing:0.95px">9</i><i style="letter-spacing:0.95px">0</i><i style="letter-spacing:0.95px">2</i></div>
<div class="t " style="left:1604.0px;top:954.97px;font-size:14px;line-height:14px;"><i style="letter-spacing:0.95px">0</i></div>
<div class="t " style="left:1706.5px;top:954.97px;font-size:14px;line-height:14px;color:#8ad16f;"><i style="letter-spacing:0.95px">0</i></div>
<div class="t " style="left:1809.0px;top:954.97px;font-size:14px;line-height:14px;color:#8ad16f;"><i style="letter-spacing:0.95px">0</i></div>
<div class="abs" style="left:1851px;top:924px;width:123px;height:123px;border-radius:50%;background:#00cb93"></div>
</body></html>
